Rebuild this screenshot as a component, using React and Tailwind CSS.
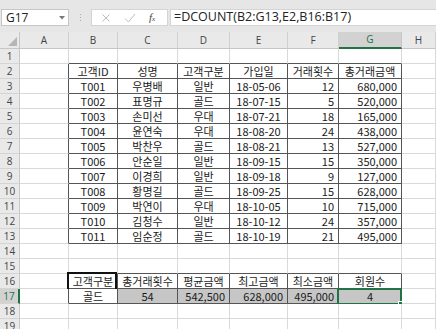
import React from "react";

const COLS = ["A", "B", "C", "D", "E", "F", "G", "H"];

// row number -> cells for B..G  [text, align]
const C = "c";
const R = "r";
const DATA = {
  2: [["고객ID", C], ["성명", C], ["고객구분", C], ["가입일", C], ["거래횟수", C], ["총거래금액", C]],
  3: [["T001", C], ["우병배", C], ["일반", C], ["18-05-06", C], ["12", R], ["680,000", R]],
  4: [["T002", C], ["표명규", C], ["골드", C], ["18-07-15", C], ["5", R], ["520,000", R]],
  5: [["T003", C], ["손미선", C], ["우대", C], ["18-07-21", C], ["18", R], ["165,000", R]],
  6: [["T004", C], ["윤연숙", C], ["우대", C], ["18-08-20", C], ["24", R], ["438,000", R]],
  7: [["T005", C], ["박찬우", C], ["골드", C], ["18-08-21", C], ["13", R], ["527,000", R]],
  8: [["T006", C], ["안순일", C], ["일반", C], ["18-09-15", C], ["15", R], ["350,000", R]],
  9: [["T007", C], ["이경희", C], ["일반", C], ["18-09-18", C], ["9", R], ["127,000", R]],
  10: [["T008", C], ["황명길", C], ["골드", C], ["18-09-25", C], ["15", R], ["628,000", R]],
  11: [["T009", C], ["박연이", C], ["우대", C], ["18-10-05", C], ["10", R], ["715,000", R]],
  12: [["T010", C], ["김청수", C], ["일반", C], ["18-10-12", C], ["24", R], ["357,000", R]],
  13: [["T011", C], ["임순정", C], ["골드", C], ["18-10-19", C], ["21", R], ["495,000", R]],
  16: [["고객구분", C], ["총거래횟수", C], ["평균금액", C], ["최고금액", C], ["최소금액", C], ["회원수", C]],
  17: [["골드", C], ["54", C], ["542,500", R], ["628,000", R], ["495,000", R], ["4", C]],
};

const inTable = (r, c) => c >= 1 && c <= 6 && ((r >= 2 && r <= 13) || (r >= 16 && r <= 17));

function Cell({ r, c }) {
  const row = DATA[r];
  const cell = row && c >= 1 && c <= 6 ? row[c - 1] : null;
  const rightDark = inTable(r, c) || (c === 0 && inTable(r, 1));
  const bottomDark = inTable(r, c) || ((r === 1 || r === 15) && c >= 1 && c <= 6);
  const gray = r === 17 && c >= 2 && c <= 6;

  return (
    <div
      className={`relative h-[15px] border-r border-b flex items-center text-[11px] leading-none text-[#1a1a1a] ${
        rightDark ? "border-r-[#555]" : "border-r-[#d9d9d9]"
      } ${bottomDark ? "border-b-[#555]" : "border-b-[#d9d9d9]"} ${gray ? "bg-[#c6c6c6]" : "bg-white"} ${
        cell && cell[1] === R ? "justify-end pr-[4px]" : "justify-center"
      }`}
    >
      {cell && <span className="whitespace-nowrap">{cell[0]}</span>}
      {r === 16 && c === 1 && (
        <div className="pointer-events-none absolute -left-[2px] -top-[2px] w-[calc(100%+2px)] h-[32px] border-2 border-[#111]" />
      )}
      {r === 17 && c === 6 && (
        <div className="pointer-events-none absolute -left-[2px] -top-[1px] w-[calc(100%+3px)] h-[17px] border-2 border-[#217346]">
          <div className="absolute -right-[4px] -bottom-[4px] w-[6px] h-[6px] bg-[#217346] border border-white" />
        </div>
      )}
    </div>
  );
}

export default function App() {
  const rows = Array.from({ length: 19 }, (_, i) => i + 1);

  return (
    <div className="w-[436px] h-[329px] overflow-hidden bg-white font-['Noto_Sans_CJK_KR','Noto_Sans',sans-serif]">
      {/* Formula bar */}
      <div className="h-[32px] bg-[#e6e6e6] flex items-start pt-[9px] pl-[1px]">
        <div className="w-[68px] h-[17px] bg-white border border-[#c6c6c6] flex items-center pl-[4px] pr-[3px] justify-between">
          <span className="text-[12px] text-[#222] font-['Open_Sans',sans-serif] leading-none">G17</span>
          <svg width="6" height="4" viewBox="0 0 6 4">
            <path d="M0 0 L6 0 L3 3.5 Z" fill="#777" />
          </svg>
        </div>
        <div className="w-[22px] h-[17px] flex flex-col items-center justify-center gap-[2px]">
          <span className="w-[1px] h-[1px] bg-[#aaa]" />
          <span className="w-[1px] h-[1px] bg-[#aaa]" />
          <span className="w-[1px] h-[1px] bg-[#aaa]" />
        </div>
        <div className="w-[77px] h-[17px] bg-white border border-[#d4d4d4] flex items-center pl-[9px] gap-[13px]">
          <svg width="10" height="10" viewBox="0 0 10 10">
            <path d="M1.5 1.5 L8.5 8.5 M8.5 1.5 L1.5 8.5" stroke="#bdbdbd" strokeWidth="1" />
          </svg>
          <svg width="12" height="10" viewBox="0 0 12 10">
            <path d="M1 5.5 L4.5 9 L11 1" stroke="#bdbdbd" strokeWidth="1" fill="none" />
          </svg>
          <span className="text-[11px] italic text-[#444] font-['Liberation_Serif',serif] leading-none">
            f<span className="text-[7px]">x</span>
          </span>
        </div>
        <div className="ml-[2px] flex-1 h-[17px] bg-white border border-[#d4d4d4] border-r-0 flex items-center pl-[3px]">
          <span className="text-[12.5px] text-[#222] font-['Open_Sans',sans-serif] leading-none whitespace-nowrap">
            =DCOUNT(B2:G13,E2,B16:B17)
          </span>
        </div>
      </div>

      {/* Sheet */}
      <div className="grid grid-cols-[20px_49px_49px_60px_52px_58px_51px_63px_1fr]">
        {/* Column headers */}
        <div className="h-[17px] bg-[#e9e9e9] border-r border-b border-[#c6c6c6] flex items-end justify-end p-[2px]">
          <svg width="9" height="9" viewBox="0 0 9 9">
            <path d="M9 0 L9 9 L0 9 Z" fill="#b5b5b5" />
          </svg>
        </div>
        {COLS.map((col) => (
          <div
            key={col}
            className={`h-[17px] flex items-center justify-center text-[10px] font-['Open_Sans',sans-serif] border-r ${
              col === "G"
                ? "bg-[#d2d2d2] text-[#217346] border-b-2 border-b-[#217346] border-r-[#c6c6c6]"
                : "bg-[#e9e9e9] text-[#444] border-b border-b-[#c6c6c6] border-r-[#d0d0d0]"
            }`}
          >
            {col}
          </div>
        ))}

        {rows.map((r) => (
          <React.Fragment key={r}>
            <div
              className={`h-[15px] flex items-center justify-center text-[10px] font-['Open_Sans',sans-serif] border-b border-b-[#d4d4d4] ${
                r === 17
                  ? "bg-[#d2d2d2] text-[#217346] border-r-2 border-r-[#217346]"
                  : "bg-[#e9e9e9] text-[#444] border-r border-r-[#c6c6c6]"
              }`}
            >
              {r}
            </div>
            {COLS.map((_, c) => (
              <Cell key={c} r={r} c={c} />
            ))}
          </React.Fragment>
        ))}
      </div>
    </div>
  );
}
